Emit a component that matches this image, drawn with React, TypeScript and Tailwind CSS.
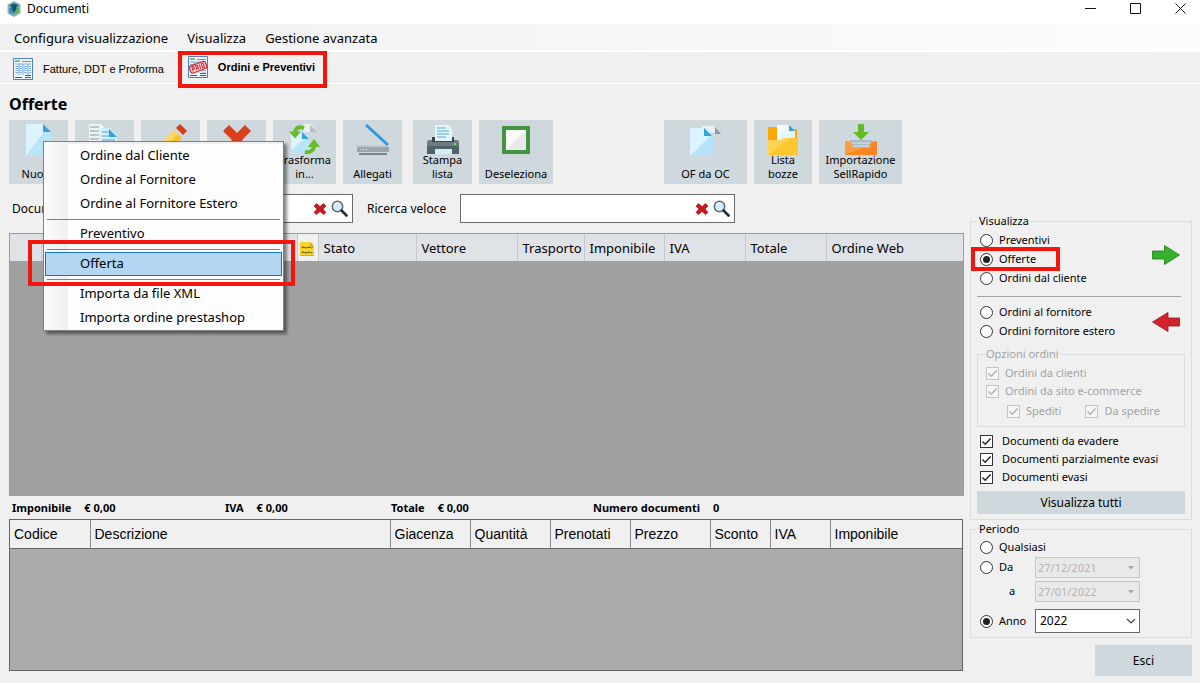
import { useState, type ReactNode } from "react";

const CheckMark = ({ className }: { className: string }) => (
    <svg viewBox="0 0 13 13" className={`pointer-events-none col-start-1 row-start-1 size-[13px] ${className}`} fill="none" stroke="currentColor" strokeWidth="1.4">
        <path d="M2.5 6.5 5.2 9.2 10.6 3.6" />
    </svg>
);

const Check = ({ label, disabled = false, gap = "gap-[9px]" }: { label: string; disabled?: boolean; gap?: string }) => {
    const [checked, setChecked] = useState(true);

    return (
        <label className={`flex items-center ${gap} ${disabled ? "text-[#a3a3a3]" : "text-black"}`}>
            <span className="grid">
                <input
                    type="checkbox"
                    checked={checked}
                    disabled={disabled}
                    onChange={(e) => setChecked(e.target.checked)}
                    className="col-start-1 row-start-1 size-[13px] appearance-none border border-[#333] bg-white disabled:border-[#c4c4c4] disabled:bg-[#f6f6f6]"
                />
                {checked && <CheckMark className={disabled ? "text-[#b0b0b0]" : "text-[#222]"} />}
            </span>
            {label}
        </label>
    );
};

const Radio = ({ name, label, checked, onChange }: { name: string; label: string; checked: boolean; onChange: () => void }) => (
    <label className="flex h-[19px] items-center gap-1.5">
        <span className="grid place-items-center">
            <input
                type="radio"
                name={name}
                checked={checked}
                onChange={onChange}
                className="col-start-1 row-start-1 size-[13px] appearance-none rounded-full border border-[#333] bg-white"
            />
            {checked && <span className="pointer-events-none col-start-1 row-start-1 size-[7px] rounded-full bg-[#222]" />}
        </span>
        {label}
    </label>
);

/* Toolbar icons */
const PageIcon = () => (
    <svg viewBox="0 0 32 32" className="size-8">
        <path d="M3 0h17l8 8v24H3z" fill="#b9e5f8" />
        <path d="M3 32V0h17l2 6z" fill="#dcf4fd" />
        <path d="M20 0l8 8h-8z" fill="#2ea3dc" />
    </svg>
);

const CopyIcon = () => (
    <svg viewBox="0 0 32 32" className="size-8">
        <path d="M0 0h12l6 6v20H0z" fill="#eef2f4" />
        <path d="M1 3h9M1 7h9M1 11h9M1 15h9" stroke="#8d989e" />
        <path d="M11 4h10l7 8v20H11z" fill="#d3effb" />
        <path d="M13 8h7M13 12h8M13 16h13" stroke="#5a9fc0" />
        <path d="M20 5l8 8h-8z" fill="#2ea3dc" />
    </svg>
);

const PencilIcon = () => (
    <svg viewBox="0 0 32 32" className="size-8">
        <path d="M19 6l8 8-16 16-10 2 2-10z" fill="#fbc02d" />
        <path d="M19 6l4 4L7 26l-4-4z" fill="#fdd65b" />
        <path d="M19 6l2-2 8 8-2 2z" fill="#cfd8dc" />
        <path d="M21 4l4-4 7 7-4 4z" fill="#d0401c" />
    </svg>
);

const DeleteIcon = () => (
    <svg viewBox="0 0 32 32" className="size-8">
        <path d="M2 7l6-6 8 8 8-8 6 6-9 9 9 9-6 6-8-9-8 9-6-6 9-9z" fill="#d9401a" />
    </svg>
);

const TransformIcon = () => (
    <svg viewBox="0 0 32 32" className="size-8">
        <path d="M14 0h8l6 8H14z" fill="#eceff1" />
        <path d="M21 1l7 7h-7z" fill="#b5bdc2" />
        <path d="M2 8h12l6 6v16H2z" fill="#b9e5f8" />
        <path d="M2 8h10l5 6L2 26z" fill="#dcf4fd" />
        <path d="M13 8l7 7h-7z" fill="#2ea3dc" />
        <path d="M15 4C9 2 6 5 6 9" fill="none" stroke="#65bd2b" strokeWidth="4" />
        <path d="M0 7.500h12l-6 7z" fill="#65bd2b" />
        <path d="M16 28c6 1 9-2 9-7" fill="none" stroke="#65bd2b" strokeWidth="4" />
        <path d="M19 23h12l-6-8z" fill="#65bd2b" />
    </svg>
);

const ScannerIcon = () => (
    <svg viewBox="0 0 32 32" className="size-8">
        <path d="M9 1l22 20" stroke="#2f9be3" strokeWidth="3" />
        <path d="M0 21h28l4 3H0z" fill="#c0cacf" />
        <path d="M0 23h32v5H0z" fill="#9aa6ac" />
        <path d="M2 29h28v2H2z" fill="#78848b" />
        <path d="M3 25.500h1M6 25.500h1M9 25.500h1" stroke="#eef2f4" />
    </svg>
);

const PrinterIcon = () => (
    <svg viewBox="0 0 32 32" className="size-8">
        <path d="M0 18q0-2 2-2h28q2 0 2 2v12H0z" fill="#6c7b83" />
        <path d="M0 22h32v8H0z" fill="#53616a" />
        <path d="M5 13h22v5H5z" fill="#37434b" />
        <path d="M8 1h13l4 4v12H8z" fill="#e4f6fd" />
        <path d="M10 4h9M10 7h12M10 10h12M10 13h9" stroke="#52a8d4" />
        <path d="M8 25h17v5H8z" fill="#cdeefa" />
        <path d="M27 20h2" stroke="#7ed957" strokeWidth="2" />
    </svg>
);

const SquareIcon = () => (
    <svg viewBox="0 0 32 32" className="size-8">
        <path d="M4 4h24v24H4z" fill="#fafafa" stroke="#43953f" strokeWidth="4" />
        <path d="M26 6v20H6z" fill="#e9e9ec" />
    </svg>
);

const ConvertIcon = () => (
    <svg viewBox="0 0 32 32" className="size-8">
        <path d="M12 2h13v7H12z" fill="#e9eef1" />
        <path d="M25 3l6 7h-6z" fill="#8d989e" />
        <path d="M0 4h14l9 8v20H0z" fill="#b5e4f8" />
        <path d="M0 32V4h14l6 8z" fill="#dcf4fd" />
        <path d="M14 4l8 8h-8z" fill="#2ea3dc" />
    </svg>
);

const FolderIcon = () => (
    <svg viewBox="0 0 32 32" className="size-8">
        <path d="M1 3h11l2 2h16v14H1z" fill="#fda802" />
        <path d="M10 1h12l6 6v12H10z" fill="#e4f6fd" />
        <path d="M10 16V1h12z" fill="#f5fcff" />
        <path d="M22 1l6 6h-6z" fill="#2ea3dc" />
        <path d="M1 16h13l3-2h14v17H1z" fill="#fdc82f" />
        <path d="M1 31V16h13l3-2h6z" fill="#fed455" />
    </svg>
);

const ImportIcon = () => (
    <svg viewBox="0 0 32 32" className="size-8">
        <path d="M5 16h22v8H5z" fill="#a8bcc8" />
        <path d="M6 19h20M7 22h18" stroke="#dbe6ec" />
        <path d="M13 0h6v8h5l-8 8-8-8h5z" fill="#63bb27" />
        <path d="M0 17l6 1 2 6h16l2-6 6-1v14H0z" fill="#fb8522" />
        <path d="M0 31V17l6 1 2 6h9z" fill="#fd9d3c" />
    </svg>
);

const SheetIcon = ({ stamped = false }: { stamped?: boolean }) => (
    <svg viewBox="0 0 20 22" className="h-[22px] w-5">
        <path d="M.5.5h19v21H.5z" fill="#edf5fd" stroke="#4f7fc0" />
        <path d="M2 3h5" stroke="#54b04a" strokeWidth="1.500" />
        <path d="M9 3.500h9" stroke="#5f93d3" />
        <path d="M2 6h16" stroke="#7fb0e6" />
        <path d="M2.500 8.500h3M2.500 10.500h3M2.500 12.500h3M2.500 14.500h3M7 8.500h2M7 10.500h2M7 12.500h2M7 14.500h2M11 8.500h3M11 10.500h3M11 12.500h3M11 14.500h3M16 8.500h2M16 10.500h2M16 12.500h2M16 14.500h2" stroke="#7fb0e6" />
        <path d="M6 6v11M10 6v11M15 6v11" stroke="#5f93d3" strokeWidth=".8" />
        <path d="M2 19.500h7M12 19.500h6M12 17.500h6" stroke="#2e5fa6" />
        {stamped && (
            <g transform="rotate(-20 10 11)">
                <rect x="1.500" y="7.500" width="17" height="7.500" rx="2" fill="#f6dcdc" stroke="#d3232b" strokeWidth="1.200" />
                <path d="M4 13.500V9h2v2.500H4M8 13.500V9h2v4.500M8 11.500h2M12 9v4.500M14 9v4.500h2V9z" fill="none" stroke="#d3232b" />
            </g>
        )}
    </svg>
);

const LogoIcon = () => (
    <svg viewBox="0 0 16 16" className="size-4">
        <path d="M8 0l6.500 3.500v9L8 16l-6.500-3.500v-9z" fill="#8fb6c0" />
        <path d="M8 2l5 2.500L8 7.500l-5-3z" fill="#1b6a7e" />
        <path d="M3 6l4.500 2.500V14L3 11.500z" fill="#3f92c5" />
        <path d="M13 6L8.500 8.500V14l4.500-2.500z" fill="#6ab04f" />
        <path d="M5.500 4h5v4L8 12 5.500 8z" fill="#17546c" />
    </svg>
);

const RedCross = () => (
    <svg viewBox="0 0 14 14" className="size-3.5">
        <path d="M3.500 1.500L7 4.500l3.500-3 2.500 2.500L10 7l3 3.500-2.500 2L7 9.500l-3.500 3L1 10.500 4 7 1 4z" fill="#c8191e" stroke="#8e1014" strokeWidth=".6" strokeLinejoin="round" />
    </svg>
);

const Magnifier = () => (
    <svg viewBox="0 0 17 17" className="size-[17px]">
        <circle cx="6.500" cy="6.500" r="5.200" fill="#d6e9f8" stroke="#5c6974" strokeWidth="1.500" />
        <path d="M4 5q1-2 3-2" fill="none" stroke="#fff" strokeWidth="1.200" />
        <path d="M10.500 10.500l5 5" stroke="#2a2d31" strokeWidth="2.600" strokeLinecap="round" />
    </svg>
);

const ArrowIcon = ({ left = false }: { left?: boolean }) => (
    <svg viewBox="0 0 28 20" className="h-5 w-7" strokeLinejoin="round">
        {left ? (
            <path d="M27.500 6H16V.500L.500 10 16 19.500V14h11.500z" fill="#d2222a" stroke="#8f1a1a" strokeWidth=".8" />
        ) : (
            <path d="M.500 6H12.500V.500L27.500 10 12.500 19.500V14H.500z" fill="#35b22c" stroke="#1e7d1b" strokeWidth=".8" />
        )}
    </svg>
);

const NoteIcon = () => (
    <svg viewBox="0 0 14 14" className="size-3.5">
        <path d="M0 0h10l4 4v10H0z" fill="#f7d52c" />
        <path d="M10 0l4 4h-4z" fill="#d9a514" />
        <path d="M1.500 5.500q1.500-1 3 0t3 0 3 0 2 0M1.500 10.500q1.500-1 3 0t3 0 3 0 2 0" fill="none" stroke="#4f430c" />
        <path d="M0 13.500h14" stroke="#e8a51b" />
    </svg>
);

// Buttons covered by the open menu keep only an accessible name
const ToolButton = ({ label, name, icon, className }: { label?: string; name?: string; icon: ReactNode; className: string }) => (
    <button type="button" aria-label={name} className={`flex h-16 shrink-0 flex-col items-center justify-between bg-[#cfd8dc] pt-1 text-[11px] leading-[14px] whitespace-pre-line ${className}`}>
        {icon}
        {label && <span className="-mt-1 pb-[3px]">{label}</span>}
    </button>
);

const menuGroups = [
    ["Ordine dal Cliente", "Ordine al Fornitore", "Ordine al Fornitore Estero"],
    ["Preventivo"],
    ["Offerta"],
    ["Importa da file XML", "Importa ordine prestashop"],
];

const NewMenu = () => (
    <div className="absolute top-[21px] left-[34px] z-10 w-[241px] border border-[#808080] bg-linear-to-r from-[#fbfbfb] from-0% to-[#f0f0f0] to-10% pt-0.5 shadow-[3px_3px_3px_rgba(0,0,0,0.45)]">
        {menuGroups.map((group, i) => (
            <ul key={group[0]} className="bg-linear-to-r from-transparent from-[24px] to-[#fdfdfd] to-[24px]">
                {i > 0 && <li aria-hidden="true" className="flex h-1.5 items-center px-[3px]"><span className="h-px flex-1 bg-[#808080]" /></li>}
                {group.map((item) => (
                    <li key={item} className="relative px-px">
                        <button
                            type="button"
                            className={`flex h-6 w-full items-center border pl-[34px] text-[13px] ${item === "Offerta" ? "border-[#1273cc] bg-[#b3d7f3]" : "border-transparent"}`}
                        >
                            {item}
                        </button>
                        {item === "Offerta" && <span className="pointer-events-none absolute -top-3 -right-3 -bottom-2.5 -left-4 border-4 border-[#f5150f]" />}
                    </li>
                ))}
            </ul>
        ))}
    </div>
);

const SearchBox = ({ id, className }: { id: string; className: string }) => (
    <div className={`flex h-[29px] items-center gap-1 border border-[#6b6b6b] bg-white pr-1 ${className}`}>
        <input id={id} type="text" className="h-full min-w-0 flex-1 px-1 text-[13px] outline-none" />
        <button type="button" aria-label="Cancella"><RedCross /></button>
        <button type="button" aria-label="Cerca"><Magnifier /></button>
    </div>
);

const ordersColumns = [
    { label: "", width: "w-[31px]" },
    { label: "", width: "w-64" },
    { label: "note", width: "w-[21px]" },
    { label: "Stato", width: "w-[98px]" },
    { label: "Vettore", width: "w-[101px]" },
    { label: "Trasporto", width: "w-[67px]" },
    { label: "Imponibile", width: "w-20" },
    { label: "IVA", width: "w-[81px]" },
    { label: "Totale", width: "w-[81px]" },
    { label: "Ordine Web", width: "" },
];

const rowsColumns = [
    { label: "Codice", width: "w-20" },
    { label: "Descrizione", width: "w-[300px]" },
    { label: "Giacenza", width: "w-20" },
    { label: "Quantità", width: "w-20" },
    { label: "Prenotati", width: "w-20" },
    { label: "Prezzo", width: "w-20" },
    { label: "Sconto", width: "w-[60px]" },
    { label: "IVA", width: "w-[60px]" },
    { label: "Imponibile", width: "" },
];

const Total = ({ label, value, className = "" }: { label: string; value: string; className?: string }) => (
    <div className={`flex gap-[13px] ${className}`}>
        <span>{label}</span>
        <span>{value}</span>
    </div>
);

const DateField = ({ id, label, value }: { id: string; label: string; value: string }) => (
    <div className="grid w-[105px] items-center">
        <input id={id} aria-label={label} disabled defaultValue={value} className="col-start-1 row-start-1 h-[21px] min-w-0 border border-[#c8c8c8] bg-[#e9e9e9] px-0.5 text-[11px] text-[#b4b4b4]" />
        <svg viewBox="0 0 6 4" className="pointer-events-none col-start-1 row-start-1 mr-1.5 h-1 w-1.5 justify-self-end" fill="#a8a8a8">
            <path d="M0 0h6L3 3.500z" />
        </svg>
    </div>
);

const Sidebar = () => {
    const [kind, setKind] = useState("Offerte");
    const [period, setPeriod] = useState("Anno");

    const kindRadio = (label: string) => (
        <Radio name="kind" label={label} checked={kind === label} onChange={() => setKind(label)} />
    );
    const periodRadio = (label: string) => (
        <Radio name="period" label={label} checked={period === label} onChange={() => setPeriod(label)} />
    );

    return (
        <aside className="flex w-[222px] shrink-0 flex-col pt-[129px] text-[11px]">
            <fieldset className="border border-[#dcdcdc] px-1.5 pt-0.5 pb-[5px]">
                <legend className="px-0.5 leading-4">Visualizza</legend>
                <div className="flex items-start justify-between pr-[5px] pl-[3px]">
                    <div>
                        {kindRadio("Preventivi")}
                        <div className="relative">
                            {kindRadio("Offerte")}
                            <span className="pointer-events-none absolute -top-[3px] -left-[9px] h-6 w-[89px] border-4 border-[#f5150f]" />
                        </div>
                        {kindRadio("Ordini dal cliente")}
                    </div>
                    <div className="pt-3.5">
                        <ArrowIcon />
                    </div>
                </div>
                <hr className="mt-2 mr-1 mb-1.5 border-[#a0a0a0]" />
                <div className="flex items-center justify-between pr-[5px] pl-[3px]">
                    <div>
                        {kindRadio("Ordini al fornitore")}
                        {kindRadio("Ordini fornitore estero")}
                    </div>
                    <ArrowIcon left />
                </div>
                <fieldset disabled className="mt-[5px] border border-[#dcdcdc] px-2 pt-[3px] pb-[7px]">
                    <legend className="leading-4 text-[#a3a3a3]">Opzioni ordini</legend>
                    <div className="flex flex-col gap-0.5 leading-4">
                        <Check label="Ordini da clienti" disabled gap="gap-1.5" />
                        <Check label="Ordini da sito e-commerce" disabled gap="gap-1.5" />
                        <div className="flex gap-6 pt-0.5 pl-[21px]">
                            <Check label="Spediti" disabled gap="gap-1.5" />
                            <Check label="Da spedire" disabled gap="gap-1.5" />
                        </div>
                    </div>
                </fieldset>
                <div className="mt-1.5 flex flex-col gap-0.5 pl-[3px] leading-4">
                    <Check label="Documenti da evadere" />
                    <Check label="Documenti parzialmente evasi" />
                    <Check label="Documenti evasi" />
                </div>
                <button type="button" className="mt-1.5 h-[23px] w-full bg-[#cfd8dc] text-[12px]">Visualizza tutti</button>
            </fieldset>

            <fieldset className="mt-px border border-[#dcdcdc] px-1.5 pt-px pb-1">
                <legend className="px-0.5 leading-4">Periodo</legend>
                <div className="flex flex-col pl-[3px]">
                    {periodRadio("Qualsiasi")}
                    <div className="flex items-center">
                        <div className="w-[55px]">{periodRadio("Da")}</div>
                        <DateField id="from" label="Da" value="27/12/2021" />
                    </div>
                    <div className="mt-[3px] flex items-center">
                        <label htmlFor="to" className="w-[55px] pl-[29px]">a</label>
                        <DateField id="to" label="a" value="27/01/2022" />
                    </div>
                    <div className="mt-[7px] flex items-center">
                        <div className="w-[55px]">{periodRadio("Anno")}</div>
                        <div className="grid w-[105px] items-center">
                            <select aria-label="Anno" defaultValue="2022" className="col-start-1 row-start-1 h-6 appearance-none border border-[#6b6b6b] bg-white px-1 text-[12px]">
                                <option>2021</option>
                                <option>2022</option>
                            </select>
                            <svg viewBox="0 0 10 6" className="pointer-events-none col-start-1 row-start-1 mr-1 h-1.5 w-2.5 justify-self-end" fill="none" stroke="#444" strokeWidth="1.200">
                                <path d="M1 1l4 4 4-4" />
                            </svg>
                        </div>
                    </div>
                </div>
            </fieldset>
            <button type="button" className="mt-[7px] h-[31px] w-[97px] self-end bg-[#cfd8dc] text-[12px]">Esci</button>
        </aside>
    );
};

const App = () => {
    return (
        <div className="flex min-h-screen flex-col bg-[#f0f0f0] font-['Noto_Sans','Open_Sans',sans-serif] text-black">
            <header className="flex h-6 items-start justify-between bg-white pl-1.5">
                <div className="flex items-center gap-[5px]">
                    <LogoIcon />
                    <h1 className="text-[12px] leading-[18px]">Documenti</h1>
                </div>
                <div className="flex gap-[34px] pt-[3px] pr-3.5">
                    {["M0 5.500h11", "M.500.500h10v10h-10z", "M.500.500l10 10M10.500.500l-10 10"].map((d, i) => (
                        <button key={d} type="button" aria-label={["Riduci", "Ingrandisci", "Chiudi"][i]}>
                            <svg viewBox="0 0 11 11" className="size-[11px]" fill="none" stroke="#111"><path d={d} /></svg>
                        </button>
                    ))}
                </div>
            </header>

            <nav className="flex h-7 items-center gap-[19px] border-b-2 border-white bg-linear-to-r from-[#f0f0f0] to-[#fcfcfc] pt-[3px] pl-3.5 text-[13px]">
                <button type="button">Configura visualizzazione</button>
                <button type="button">Visualizza</button>
                <button type="button">Gestione avanzata</button>
            </nav>

            <div className="flex h-8 items-center border-b border-white pt-[3px] pl-[13px] text-[11px]">
                <button type="button" className="flex items-center gap-2.5 font-['Liberation_Sans',Arial,sans-serif]">
                    <SheetIcon />
                    Fatture, DDT e Proforma
                </button>
                <button type="button" className="relative ml-6 flex items-center gap-2.5 pb-1 font-['Liberation_Sans',Arial,sans-serif] font-bold">
                    <SheetIcon stamped />
                    Ordini e Preventivi
                    <span className="pointer-events-none absolute -top-[5px] -right-3 -bottom-1.5 -left-2.5 border-4 border-[#f5150f]" />
                </button>
            </div>

            <div className="flex flex-1 gap-1.5 pr-2 pb-[7px] pl-[9px]">
                <main className="flex min-w-0 flex-1 flex-col pb-[5px]">
                    <h2 className="pt-2 pb-1 text-[16px] leading-6 font-bold">Offerte</h2>

                    <div className="flex gap-[7px]">
                        <div className="relative">
                            <ToolButton label="Nuovo" icon={<PageIcon />} className="w-[59px]" />
                            <NewMenu />
                        </div>
                        <ToolButton name="Duplica" icon={<CopyIcon />} className="w-[59px]" />
                        <ToolButton name="Modifica" icon={<PencilIcon />} className="w-[59px]" />
                        <ToolButton name="Elimina" icon={<DeleteIcon />} className="w-[59px]" />
                        <ToolButton label={"Trasforma\nin..."} icon={<TransformIcon />} className="w-[63px]" />
                        <ToolButton label="Allegati" icon={<ScannerIcon />} className="w-[59px]" />
                        <ToolButton label={"Stampa\nlista"} icon={<PrinterIcon />} className="ml-1 w-[59px]" />
                        <ToolButton label="Deseleziona" icon={<SquareIcon />} className="w-[74px]" />
                        <ToolButton label="OF da OC" icon={<ConvertIcon />} className="ml-[104px] w-[83px]" />
                        <ToolButton label={"Lista\nbozze"} icon={<FolderIcon />} className="w-[58px]" />
                        <ToolButton label={"Importazione\nSellRapido"} icon={<ImportIcon />} className="w-[83px]" />
                    </div>

                    <div className="flex items-center pt-2.5 pb-2.5 pl-[3px] text-[12px]">
                        <label htmlFor="document" className="w-[88px]">Documento</label>
                        <SearchBox id="document" className="w-[253px]" />
                        <label htmlFor="quick" className="w-[107px] pl-3.5">Ricerca veloce</label>
                        <SearchBox id="quick" className="w-[275px]" />
                    </div>

                    <div className="flex-1 border border-[#9b9b9b] bg-[#a0a0a0]">
                        <table className="w-full table-fixed text-left text-[13px]">
                            <thead>
                                <tr className="h-[27px] bg-[#dfe3e8]">
                                    {ordersColumns.map(({ label, width }, i) => (
                                        <th key={i} scope="col" className={`border-r border-[#c6cacf] pt-0.5 font-normal whitespace-nowrap last:border-r-0 ${width} ${label === "note" ? "bg-[#f0f0f0] pl-0.5" : "pl-[5px]"}`}>
                                            {label === "note" ? <NoteIcon /> : label}
                                        </th>
                                    ))}
                                </tr>
                            </thead>
                        </table>
                    </div>

                    <div className="flex h-[23px] items-center pt-0.5 pl-[3px] text-[11px] font-bold">
                        <Total label="Imponibile" value="€ 0,00" className="w-[213px]" />
                        <Total label="IVA" value="€ 0,00" className="w-[166px]" />
                        <Total label="Totale" value="€ 0,00" className="w-[202px]" />
                        <Total label="Numero documenti" value="0" />
                    </div>

                    <div className="mr-px h-[152px] border border-[#646464] bg-[#ababab]">
                        <table className="w-full table-fixed text-left font-['Liberation_Sans',Arial,sans-serif] text-[14px]">
                            <thead>
                                <tr className="h-7 border-b border-[#646464] bg-[#f0f0f0]">
                                    {rowsColumns.map(({ label, width }) => (
                                        <th key={label} scope="col" className={`border-r border-[#8a8a8a] pt-0.5 pl-1 font-normal last:border-r-0 ${width}`}>{label}</th>
                                    ))}
                                </tr>
                            </thead>
                        </table>
                    </div>
                </main>

                <Sidebar />
            </div>
        </div>
    );
};

export default App;
